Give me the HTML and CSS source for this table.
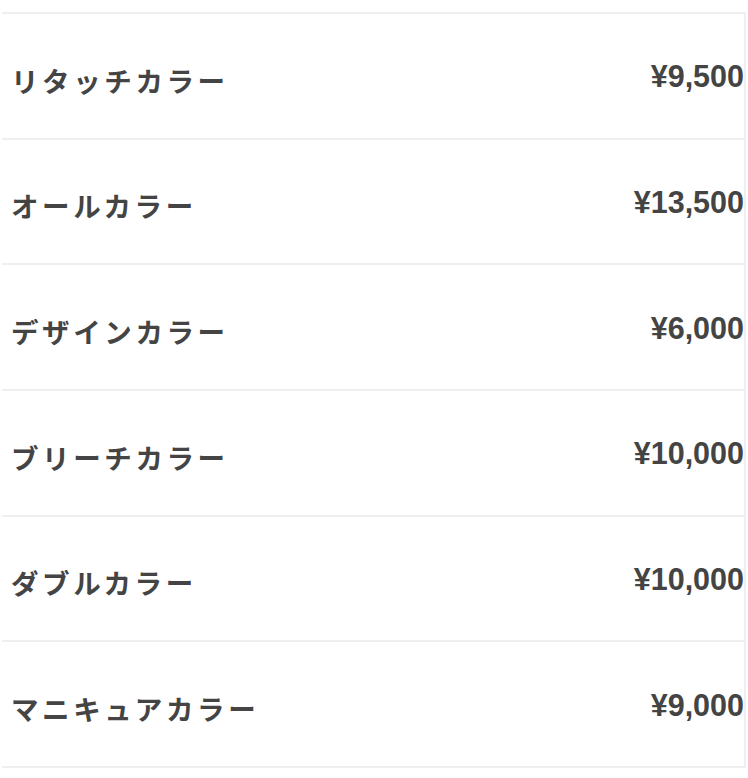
FILE: index.html
```html
<!DOCTYPE html>
<html lang="ja">
<head>
<meta charset="utf-8">
<title>カラーメニュー</title>
<link rel="stylesheet" href="styles.css">
</head>
<body>
<ul class="menu">
  <li class="item"><span class="name">リタッチカラー</span><span class="price">¥9,500</span></li>
  <li class="item"><span class="name">オールカラー</span><span class="price">¥13,500</span></li>
  <li class="item"><span class="name">デザインカラー</span><span class="price">¥6,000</span></li>
  <li class="item"><span class="name">ブリーチカラー</span><span class="price">¥10,000</span></li>
  <li class="item"><span class="name">ダブルカラー</span><span class="price">¥10,000</span></li>
  <li class="item"><span class="name">マニキュアカラー</span><span class="price">¥9,000</span></li>
</ul>
</body>
</html>
```
FILE: styles.css
```css
html, body {
  margin: 0;
  padding: 0;
  background: #fff;
}
.menu {
  list-style: none;
  margin: 12px 0 0 2px;
  padding: 0;
  width: 742px;
  border-top: 2px solid #efefef;
  border-right: 2px solid #efefef;
}
.item {
  display: flex;
  justify-content: space-between;
  align-items: center;
  box-sizing: border-box;
  height: 125.67px;
  border-bottom: 2px solid #efefef;
  padding: 0 0 0 9px;
  color: #444;
}
.name {
  font-family: "Noto Sans CJK JP", sans-serif;
  font-weight: 700;
  font-size: 27.5px;
  letter-spacing: 3.6px;
  position: relative;
  top: 4px;
}
.price {
  font-family: "Liberation Sans", Arial, sans-serif;
  font-weight: 700;
  font-size: 30.5px;
  position: relative;
  top: 1px;
}
```
